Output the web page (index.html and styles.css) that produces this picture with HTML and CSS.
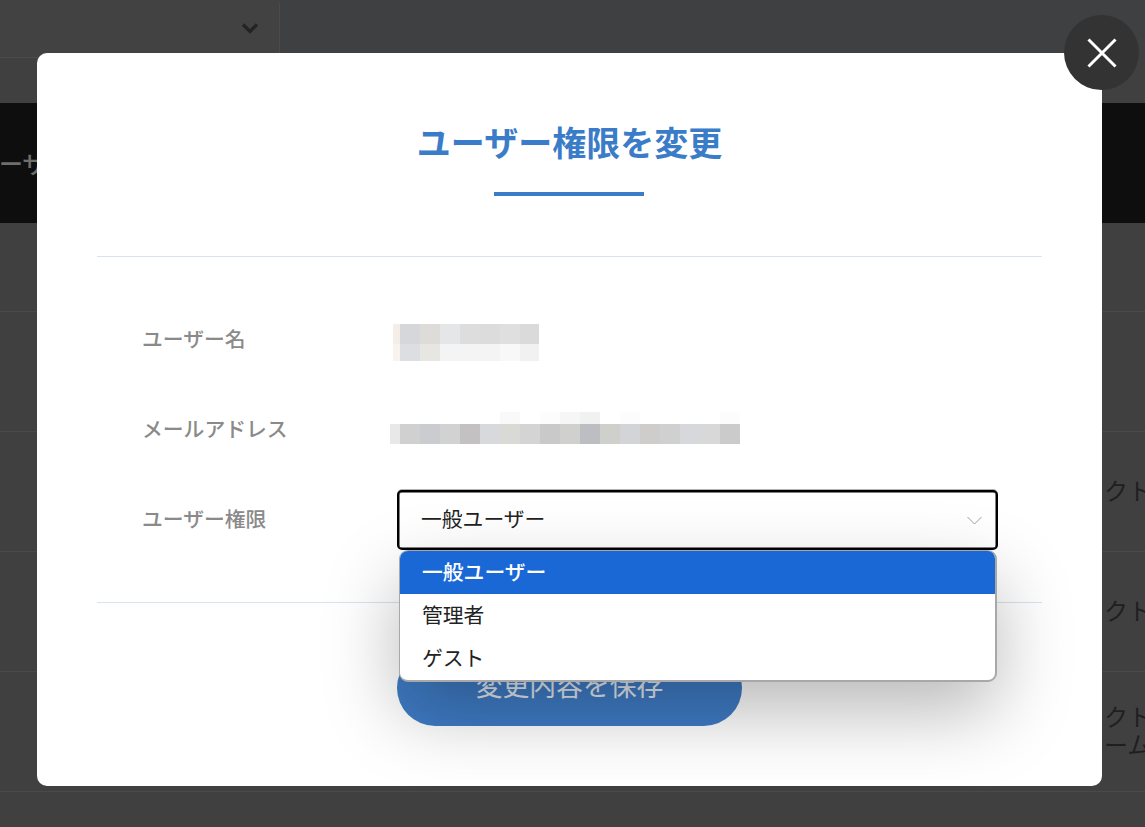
FILE: index.html
```html
<!DOCTYPE html>
<html lang="ja">
<head>
<meta charset="utf-8">
<title>ユーザー権限を変更</title>
<link rel="stylesheet" href="styles.css">
</head>
<body>
<div class="page">
  <div class="topbar">
    <div class="filter">
      <svg class="filter-chevron" width="18" height="12" viewBox="0 0 18 12"><path d="M2 2.5 9 9.5 16 2.5" fill="none" stroke="#232323" stroke-width="3.2"/></svg>
    </div>
  </div>
  <div class="subbar"></div>
  <div class="table-head"><span class="head-text">ユーザー権限</span></div>
  <div class="row row-first"></div>
  <div class="row"></div>
  <div class="row"><span class="cell">プロジェクト</span></div>
  <div class="row"><span class="cell">プロジェクト</span></div>
  <div class="row"><span class="cell">プロジェクト<br>制作部チーム</span></div>
</div>

<div class="modal">
  <header class="modal-head">
    <h1 class="modal-title">ユーザー権限を変更</h1>
    <div class="title-rule"></div>
  </header>
  <div class="form">
    <div class="field">
      <div class="label">ユーザー名</div>
      <div class="mosaic mosaic-name"></div>
    </div>
    <div class="field">
      <div class="label">メールアドレス</div>
      <div class="mosaic mosaic-mail"></div>
    </div>
    <div class="field">
      <div class="label">ユーザー権限</div>
      <div class="select-wrap">
        <div class="select">
          <span>一般ユーザー</span>
          <svg class="select-chevron" width="15" height="9" viewBox="0 0 15 9"><path d="M.5 1 7.5 8 14.5 1" fill="none" stroke="#a0a0a0" stroke-width="1"/></svg>
        </div>
        <ul class="options">
          <li class="option option-active">一般ユーザー</li>
          <li class="option">管理者</li>
          <li class="option">ゲスト</li>
        </ul>
      </div>
    </div>
  </div>
  <footer class="modal-foot">
    <button class="save" type="button">変更内容を保存</button>
  </footer>
</div>

<button class="close" type="button" aria-label="閉じる">
  <svg width="30" height="30" viewBox="0 0 30 30"><path d="M1.5 1.5 28.5 28.5M28.5 1.5 1.5 28.5" fill="none" stroke="#fff" stroke-width="3"/></svg>
</button>
</body>
</html>
```
FILE: styles.css
```css
* { box-sizing: border-box; }
html, body { margin: 0; height: 100%; }
body {
  position: relative;
  height: 827px;
  overflow: hidden;
  background: #404041;
  font-family: "Noto Sans CJK JP", "Noto Sans", sans-serif;
}
.page { width: 1400px; margin-left: -21px; }
.topbar { height: 57px; background: #3f4042; }
.filter {
  position: relative;
  width: 301px;
  height: 58px;
  background: #424242;
  border-right: 1px solid #4b4b4b;
  border-bottom: 1px solid #4b4b4b;
  border-top-right-radius: 4px;
  display: flex;
  align-items: center;
  justify-content: flex-end;
  padding-right: 20px;
}
.filter-chevron { display: block; margin-top: -1px; }
.subbar { height: 46px; }
.table-head {
  height: 120px;
  background: #0e0e0e;
  display: flex;
  align-items: center;
}
.head-text { margin-left: -4px; color: #6e6e6e; font-size: 24px; font-weight: 500; line-height: 1; white-space: nowrap; }
.row {
  height: 120px;
  border-bottom: 1px solid #4a4a4a;
  display: flex;
  align-items: center;
  padding: 0 0 3px 1029px;
  color: #1f1f1f;
  font-size: 24px;
  line-height: 28px;
}
.row-first { height: 89px; }
.cell { white-space: nowrap; }

.modal {
  position: absolute;
  left: 37px;
  top: 53px;
  width: 1065px;
  height: 733px;
  background: #fff;
  border-radius: 10px;
  padding: 0 60px;
}
.modal-head {
  height: 204px;
  border-bottom: 1px solid #d8e3ef;
  padding-top: 65px;
  display: flex;
  flex-direction: column;
  align-items: center;
}
.modal-title {
  margin: 0;
  color: #3b7cc9;
  font-size: 34px;
  font-weight: 700;
  line-height: 48px;
}
.title-rule { width: 150px; height: 4px; background: #3b7cc9; margin: 26px 1px 0 0; }
.form {
  height: 346px;
  border-bottom: 1px solid #d8e3ef;
  padding: 53px 0 0 45px;
  display: flex;
  flex-direction: column;
  gap: 30px;
}
.field { display: flex; align-items: center; height: 60px; }
.label { width: 255px; flex: none; padding-bottom: 4px; color: #8a8a8a; font-size: 20.8px; font-weight: 500; }

.mosaic { background-repeat: no-repeat; }
.mosaic-name {
  width: 146px;
  height: 37px;
  margin: 5px 0 0 -4px;
  background-image:
    linear-gradient(90deg, #f5eee8 7px, #d5d7da 7px 27px, #dedcd8 27px 47px, #e5e6e8 47px 67px, #ddd 67px 87px, #dcdcdc 87px 107px, #dfdfdf 107px 127px, #dadada 127px),
    linear-gradient(90deg, #f8f3ef 7px, #dcdee1 7px 27px, #e7e6e3 27px 47px, #f4f4f4 47px 107px, #f8f8f8 107px 127px, #f1f1f1 127px);
  background-size: 100% 20px, 100% 17px;
  background-position: 0 0, 0 20px;
}
.mosaic-mail {
  width: 350px;
  height: 32px;
  margin: -4px 0 0 -7px;
  background-image:
    linear-gradient(90deg, #fff 110px, #f9f9f9 110px 130px, #fff 130px 150px, #fcfcfc 150px 170px, #f6f6f6 170px 190px, #f1f1f1 190px 210px, #fff 210px 230px, #fcfcfc 230px 250px, #fff 250px 330px, #fcfcfc 330px),
    linear-gradient(90deg, #e8e8e8 10px, #d0d0d0 10px 30px, #cbcccf 30px 50px, #d2d2d2 50px 70px, #c3c1c2 70px 90px, #d7d9dc 90px 110px, #d9d9d6 110px 130px, #d4d4d4 130px 150px, #c9c9ca 150px 170px, #d0d0ce 170px 190px, #bdbec2 190px 210px, #cfcfcc 210px 230px, #d3d4d7 230px 250px, #cfcdcb 250px 270px, #d0d0d0 270px 290px, #d7d8db 290px 310px, #d8d8d8 310px 330px, #cbcbcb 330px);
  background-size: 100% 12px, 100% 20px;
  background-position: 0 0, 0 12px;
}

.select-wrap { position: relative; width: 601px; height: 60px; }
.select {
  height: 60px;
  border: 2px solid #000;
  border-radius: 5px;
  background: #fff;
  padding: 0 14px 4px 22px;
  display: flex;
  align-items: center;
  justify-content: space-between;
  color: #222;
  font-size: 20.8px;
  box-shadow: inset 0 0 0 .5px #000, 0 -1px 0 rgba(0, 0, 0, .3);
}
.select-chevron { margin-top: 4px; }
.options {
  position: absolute;
  left: 2px;
  top: 60px;
  width: 598px;
  margin: 0;
  padding: 0;
  list-style: none;
  background: #fff;
  border: 1px solid #a8a8a8;
  border-width: 1px 2px 2px 1px;
  border-radius: 9px;
  overflow: hidden;
  box-shadow: 0 30px 75px rgba(0, 0, 0, .28);
}
.option {
  height: 43px;
  padding: 0 0 4px 22px;
  display: flex;
  align-items: center;
  color: #222;
  font-size: 20.8px;
}
.option-active { background: #1a68d6; color: #fff; font-weight: 500; }

.modal-foot { padding-top: 47px; display: flex; justify-content: center; }
.save {
  width: 345px;
  height: 76px;
  padding: 0 0 8px;
  border: 0;
  border-radius: 38px;
  background: #3f7cc6;
  color: #e4ebf3;
  font-family: inherit;
  font-size: 26.8px;
}

.close {
  position: absolute;
  left: 1064px;
  top: 15px;
  width: 75px;
  height: 75px;
  padding: 0;
  border: 0;
  border-radius: 50%;
  background: #333;
  display: flex;
  align-items: center;
  justify-content: center;
}
```
